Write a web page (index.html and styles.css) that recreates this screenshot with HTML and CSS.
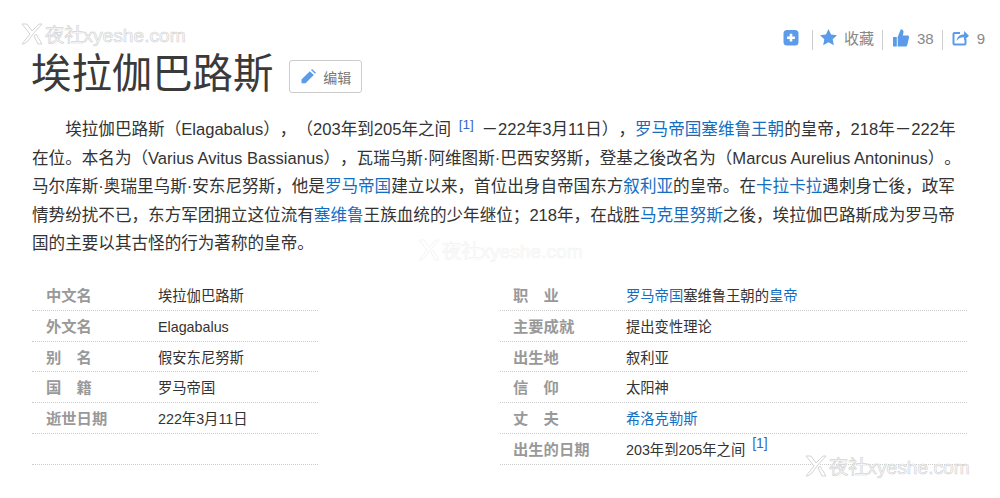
FILE: index.html
```html
<!DOCTYPE html>
<html lang="zh-CN">
<head>
<meta charset="utf-8">
<title>埃拉伽巴路斯</title>
<link rel="stylesheet" href="styles.css">
</head>
<body>
<div class="page">
  <div class="actions">
    <svg class="ic" width="16" height="17" viewBox="0 0 16 17"><rect x="0.500" y="1" width="15" height="15.500" rx="3.500" fill="#5b9bea"/><path d="M8 4.800v7.800M4.100 8.700h7.800" stroke="#fff" stroke-width="2.600"/></svg>
    <span class="sep sep-a"></span>
    <svg class="ic" width="17" height="17" viewBox="0 0 17 17"><path d="M8.500 0l2.600 5.500 5.900.7-4.300 4.100 1.100 6-5.300-3-5.300 3 1.100-6L0 6.200l5.900-.7z" fill="#5b9bea"/></svg>
    <span class="act-text act-fav">收藏</span>
    <span class="sep sep-b"></span>
    <svg class="ic" width="16" height="18" viewBox="0 0 16 18"><path d="M0 8h3.800v9.500H0zM4.700 8l3.100-7.800c1.700 0 2.900 1.100 2.700 2.900l-.6 3.300h4.400c1.200 0 2 1 1.700 2.200l-1.700 7.400c-.3 1-1 1.500-2 1.500H4.700z" fill="#5b9bea"/></svg>
    <span class="act-text act-num">38</span>
    <span class="sep sep-c"></span>
    <svg class="ic" width="17" height="17" viewBox="0 0 17 17"><path d="M13.500 10v4.500a1 1 0 0 1-1 1H2.500a1 1 0 0 1-1-1V5a1 1 0 0 1 1-1h5.500" fill="none" stroke="#5b9bea" stroke-width="2"/><path d="M4.500 12c.5-4 3-6.500 7.500-6.500V2l5 4.800-5 4.700V8.300c-3.500 0-5.500 1-7.500 3.700z" fill="#5b9bea"/></svg>
    <span class="act-text act-last">9</span>
  </div>

  <div class="head">
    <h1 class="title">埃拉伽巴路斯</h1>
    <a class="edit">
      <svg width="15" height="15" viewBox="0 0 15 15"><path d="M0.500 10.500 8.800 2.200l4 3.800L4.500 14.300H0.500z" fill="#5b9bea"/><path d="M10 1l1-1 4 3.800-1 1z" fill="#5b9bea"/></svg>
      <span>编辑</span>
    </a>
  </div>

  <div class="para">
    <p class="line first">埃拉伽巴路斯（Elagabalus），（203年到205年之间 <sup class="ref">[1]</sup> －222年3月11日），<a class="link">罗马帝国塞维鲁王朝</a>的皇帝，218年－222年</p>
    <p class="line">在位。本名为（Varius Avitus Bassianus），瓦瑞乌斯·阿维图斯·巴西安努斯，登基之後改名为（Marcus Aurelius Antoninus）。</p>
    <p class="line">马尔库斯·奥瑞里乌斯·安东尼努斯，他是<a class="link">罗马帝国</a>建立以来，首位出身自帝国东方<a class="link">叙利亚</a>的皇帝。在<a class="link">卡拉卡拉</a>遇刺身亡後，政军</p>
    <p class="line">情势纷扰不已，东方军团拥立这位流有<a class="link">塞维鲁</a>王族血统的少年继位；218年，在战胜<a class="link">马克里努斯</a>之後，埃拉伽巴路斯成为罗马帝</p>
    <p class="line">国的主要以其古怪的行为著称的皇帝。</p>
  </div>

  <div class="info">
    <dl class="col">
      <div class="row"><dt>中文名</dt><dd>埃拉伽巴路斯</dd></div>
      <div class="row"><dt>外文名</dt><dd>Elagabalus</dd></div>
      <div class="row"><dt>别&emsp;名</dt><dd>假安东尼努斯</dd></div>
      <div class="row"><dt>国&emsp;籍</dt><dd>罗马帝国</dd></div>
      <div class="row"><dt>逝世日期</dt><dd>222年3月11日</dd></div>
      <div class="row"><dt></dt><dd></dd></div>
    </dl>
    <dl class="col col-r">
      <div class="row"><dt>职&emsp;业</dt><dd><a class="link">罗马帝国</a>塞维鲁王朝的<a class="link">皇帝</a></dd></div>
      <div class="row"><dt>主要成就</dt><dd>提出变性理论</dd></div>
      <div class="row"><dt>出生地</dt><dd>叙利亚</dd></div>
      <div class="row"><dt>信&emsp;仰</dt><dd>太阳神</dd></div>
      <div class="row"><dt>丈&emsp;夫</dt><dd><a class="link">希洛克勒斯</a></dd></div>
      <div class="row"><dt>出生的日期</dt><dd>203年到205年之间 <sup class="ref small">[1]</sup></dd></div>
    </dl>
  </div>

  <div class="mark mark-top"><svg width="22" height="22" viewBox="0 0 22 22"><path d="M1 1h5l5 7 7-7h3L12 11 7 18l-4 3H1l8-10z M13 13l2-2 6 10h-4z" fill="#fff" stroke="#d4d4d4"/></svg><span>夜社xyeshe.com</span></div>
  <div class="mark mark-mid"><svg width="22" height="22" viewBox="0 0 22 22"><path d="M1 1h5l5 7 7-7h3L12 11 7 18l-4 3H1l8-10z M13 13l2-2 6 10h-4z" fill="#fff" stroke="#f3f3f3"/></svg><span>夜社xyeshe.com</span></div>
  <div class="mark mark-bot"><svg width="22" height="22" viewBox="0 0 22 22"><path d="M1 1h5l5 7 7-7h3L12 11 7 18l-4 3H1l8-10z M13 13l2-2 6 10h-4z" fill="#fff" stroke="#d4d4d4"/></svg><span>夜社xyeshe.com</span></div>
</div>
</body>
</html>
```

FILE: styles.css
```css
* { box-sizing: border-box; }
html, body { margin: 0; padding: 0; background: #fff; }
body {
  font-family: "Liberation Sans", "Noto Sans CJK SC", sans-serif;
  color: #333;
  text-spacing-trim: space-all;
}
.page { position: relative; width: 1000px; height: 498px; overflow: hidden; padding: 29px 0 0 32px; }

.actions { display: flex; align-items: center; justify-content: flex-end; height: 20px; padding-right: 15px; margin-left: -32px; font-size: 15px; color: #888; }
.ic { display: block; flex: none; margin-top: -3px; }
.sep { width: 1px; height: 20px; background: #ccc; flex: none; margin-top: 2px; }
.sep-a { margin-left: 13px; margin-right: 7px; }
.sep-b { margin-left: 8px; margin-right: 10px; }
.sep-c { margin-left: 8px; margin-right: 9px; }
.act-text { line-height: 20px; }
.act-fav { margin-left: 7px; }
.act-num { margin-left: 8px; }
.act-last { margin-left: 8px; }

.head { display: flex; align-items: center; height: 50px; margin-left: -1px; }
.title { margin: 0; font-size: 40.400px; font-weight: 400; line-height: 48px; color: #3a3a3a; }
.edit { display: flex; align-items: center; gap: 7px; width: 73px; height: 33px; margin-left: 16px; margin-top: 5px; padding-left: 11px; border: 1px solid #ccc; border-radius: 3px; font-size: 14px; color: #777; }

.para { margin-top: 17px; font-size: 16.580px; line-height: 28.600px; color: #333; }
.line { margin: 0; white-space: nowrap; }
.first { text-indent: 2em; }
.link { color: #136ec2; }
.ref { color: #3366cc; font-size: 13.500px; line-height: 0; vertical-align: 6px; margin: 0 3px; }
.ref.small { vertical-align: 7px; font-size: 14px; }

.info { display: grid; grid-template-columns: 286px 467px; column-gap: 182px; margin-top: 21px; }
.col { margin: 0; }
.row { display: flex; height: 30.800px; border-bottom: 1px dotted #ccc; font-size: 14.300px; line-height: 33px; }
.row dt { width: 126px; padding-left: 14px; font-size: 15.300px; line-height: 31px; font-weight: 700; color: #999; flex: none; }
.col-r .row dt { padding-left: 13px; }
.row dd { margin: 0; color: #333; }

.mark { position: absolute; display: flex; align-items: center; gap: 2px; font-size: 19.200px; color: #fff; -webkit-text-stroke: 0.7px #d4d4d4; }
.mark-top { left: 21px; top: 20px; }
.mark-mid { left: 418px; top: 236px; -webkit-text-stroke-color: #f3f3f3; }
.mark-bot { left: 805px; top: 452px; }
```
